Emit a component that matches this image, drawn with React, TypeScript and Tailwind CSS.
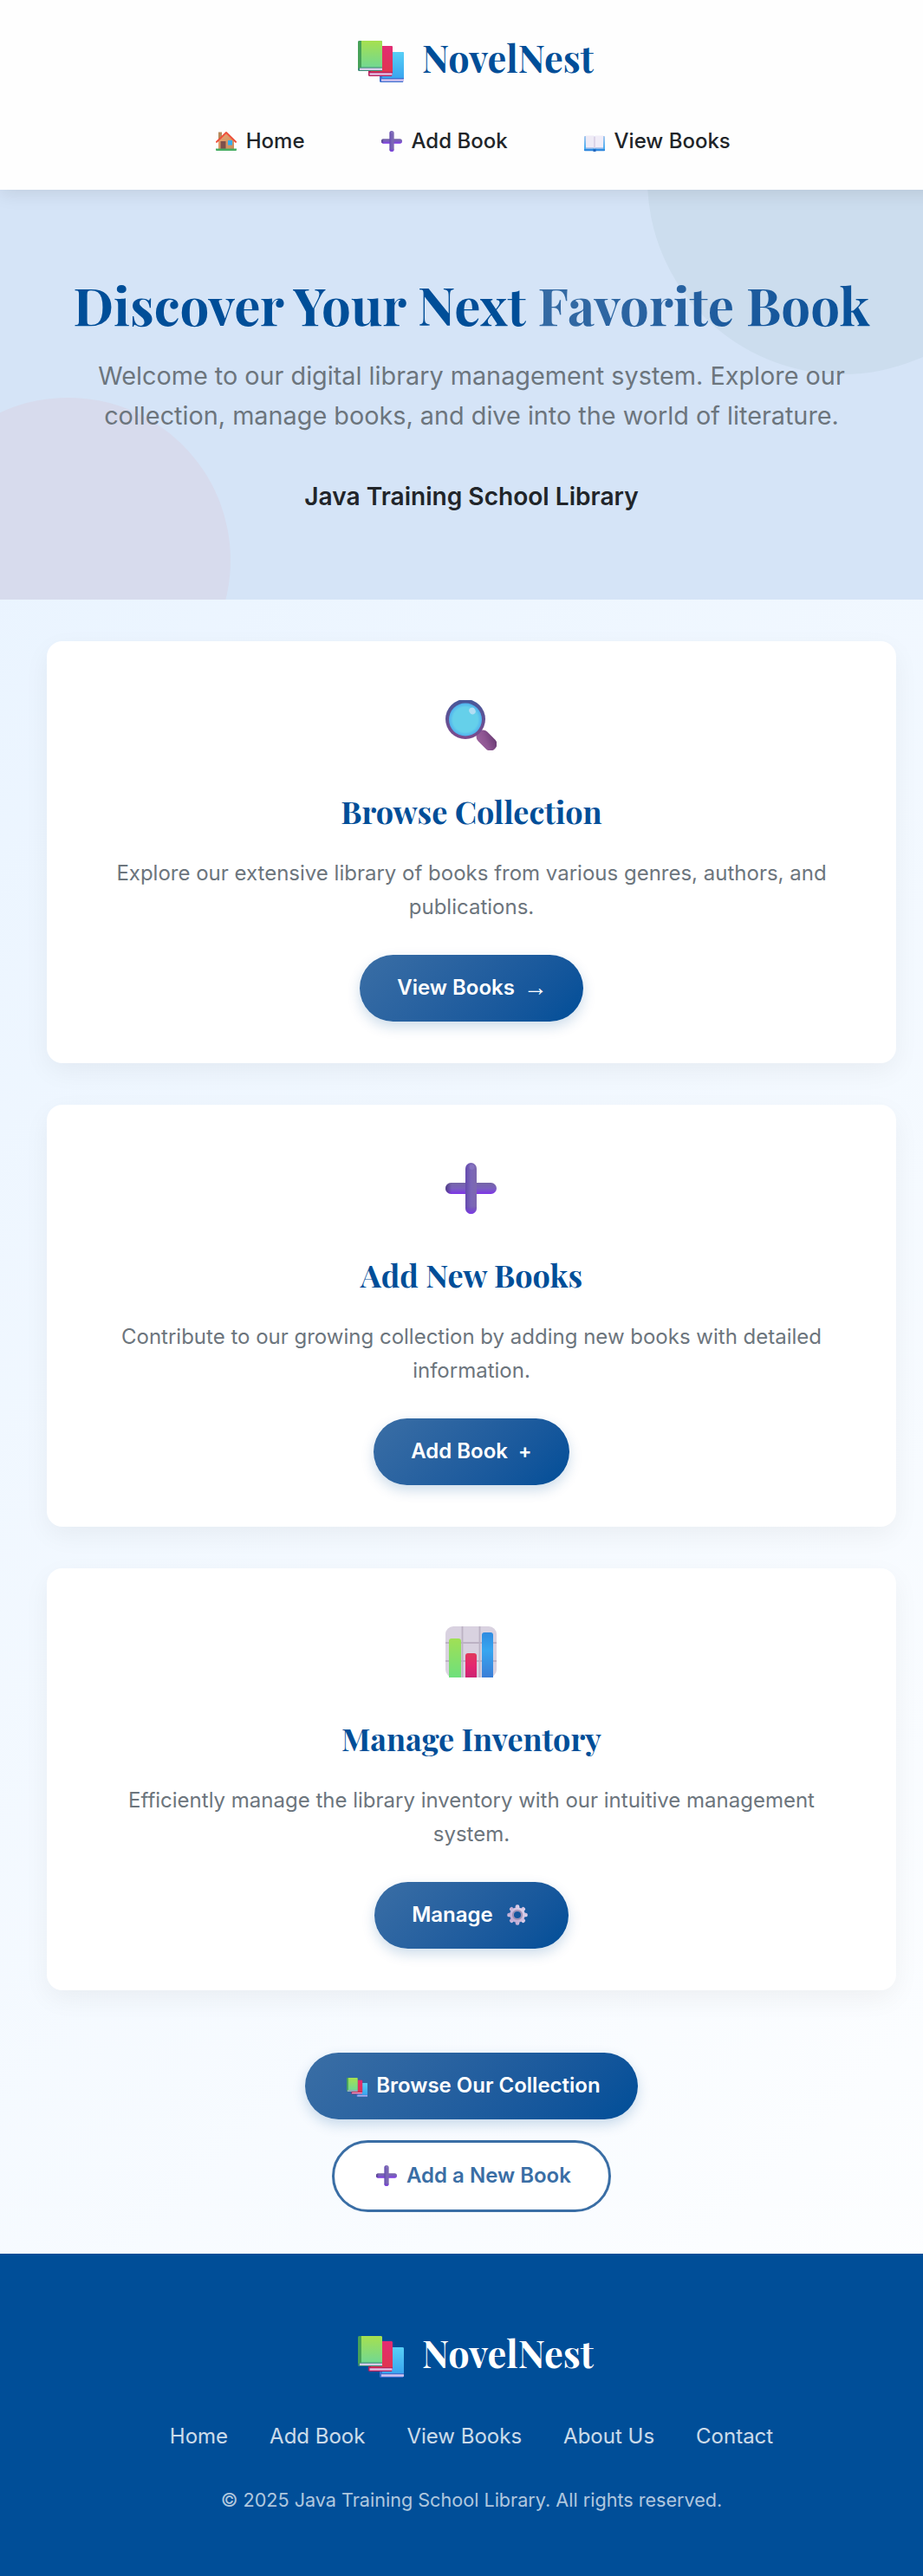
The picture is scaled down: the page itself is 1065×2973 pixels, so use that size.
import type { ReactNode } from "react";

function BooksIcon({ className }: { className: string }) {
  return (
    <svg viewBox="0 0 53 48" className={className} preserveAspectRatio="none" aria-hidden="true">
      <defs>
        <linearGradient id="bk-g" x1="0" y1="0" x2="0" y2="1"><stop stopColor="#a6e04f" /><stop offset="1" stopColor="#72d891" /></linearGradient>
        <linearGradient id="bk-r" x1="0" y1="0" x2="0" y2="1"><stop stopColor="#e22c74" /><stop offset="1" stopColor="#e0354f" /></linearGradient>
        <linearGradient id="bk-b" x1="0" y1="0" x2="0" y2="1"><stop stopColor="#57d0f6" /><stop offset="1" stopColor="#3aa5ef" /></linearGradient>
      </defs>
      <path d="M25 15a2 2 0 0 1 2-2h24.500a1.500 1.500 0 0 1 1.500 1.500V44l-1 4H26.500A1.500 1.500 0 0 1 25 46.500z" fill="#3b6fd0" />
      <path d="M28 13h23.500a1.500 1.500 0 0 1 1.500 1.500V43H28z" fill="url(#bk-b)" />
      <path d="M27 44.300h26v2.500H27z" fill="#d4c3ee" />
      <path d="M12 8a2 2 0 0 1 2-2h24.500A1.500 1.500 0 0 1 40 7.500V37l-1 4H13.500A1.500 1.500 0 0 1 12 39.500z" fill="#b81f5b" />
      <path d="M15 6h23.500A1.500 1.500 0 0 1 40 7.500V36H15z" fill="url(#bk-r)" />
      <path d="M13.500 37.300H39.500v2.400H13.500z" fill="#e4bfe4" />
      <path d="M0 2a2 2 0 0 1 2-2h24.500A1.500 1.500 0 0 1 28 1.500V35H1.500A1.500 1.500 0 0 1 0 33.500z" fill="#3b8a76" />
      <path d="M0 2a2 2 0 0 1 2-2h2v30.500L0 32z" fill="#46a158" />
      <path d="M4 0h22.500A1.500 1.500 0 0 1 28 1.500V30.500H4z" fill="url(#bk-g)" />
      <path d="M2 31.600h26v2.400H2z" fill="#d6cdea" />
    </svg>
  );
}

function HouseIcon({ className }: { className: string }) {
  return (
    <svg viewBox="0 0 24 23" className={className} aria-hidden="true">
      <defs><linearGradient id="hs-w" x1="0" y1="0" x2="1" y2="1"><stop stopColor="#e9a673" /><stop offset="1" stopColor="#c98d5c" /></linearGradient></defs>
      <path d="M3 1.500h4V10H3z" fill="#b88a5c" />
      <path d="M3 11.500 12 3l9 8.500V21H3z" fill="url(#hs-w)" />
      <path d="M5.500 12h6v9h-6z" fill="#7d4f4b" />
      <path d="M14 11h5v5.500h-5z" fill="#35aef0" />
      <path d="M1 12.800 12 2l11 10.800" fill="none" stroke="#ee4f3a" strokeWidth="2" strokeLinecap="round" strokeLinejoin="round" />
      <path d="M0 20.600h24V22a1 1 0 0 1-1 1H1a1 1 0 0 1-1-1z" fill="#46ad62" />
    </svg>
  );
}

function PlusIcon({ className }: { className: string }) {
  return (
    <svg viewBox="0 0 59 59" className={className} aria-hidden="true">
      <defs>
        <linearGradient id="pl-h" x1="0" y1="0" x2="0" y2="1"><stop stopColor="#7566a6" /><stop offset=".5" stopColor="#7a60be" /><stop offset="1" stopColor="#7f35e8" /></linearGradient>
        <linearGradient id="pl-v" x1="0" y1="0" x2="1" y2="0"><stop stopColor="#6449ad" /><stop offset=".5" stopColor="#7a66b8" /><stop offset="1" stopColor="#7d69ae" /></linearGradient>
        <linearGradient id="pl-e" x1="0" y1="0" x2="0" y2="1"><stop offset=".85" stopColor="#6a35c8" stopOpacity="0" /><stop offset="1" stopColor="#8038f0" /></linearGradient>
        <linearGradient id="pl-l" x1="0" y1="0" x2="1" y2="0"><stop stopColor="#4d3a83" /><stop offset=".12" stopColor="#4d3a83" stopOpacity="0" /></linearGradient>
      </defs>
      <rect x="0" y="23" width="59" height="13" rx="6.500" fill="url(#pl-h)" />
      <rect x="0" y="23" width="59" height="13" rx="6.500" fill="url(#pl-l)" />
      <rect x="23" y="0" width="13" height="59" rx="6.500" fill="url(#pl-v)" />
      <rect x="23" y="0" width="13" height="59" rx="6.500" fill="url(#pl-e)" />
      <circle cx="30.500" cy="5" r="3" fill="#8b79c4" opacity=".7" />
    </svg>
  );
}

function OpenBookIcon({ className }: { className: string }) {
  return (
    <svg viewBox="0 0 24 19" className={className} aria-hidden="true">
      <defs><linearGradient id="ob" x1="0" y1="0" x2="0" y2="1"><stop stopColor="#a9c8ee" /><stop offset="1" stopColor="#38a8f2" /></linearGradient></defs>
      <rect x="0" y="1" width="24" height="17" rx="1" fill="url(#ob)" />
      <path d="M0 16.200h24V17.500a.8.800 0 0 1-.8.800H.8a.8.800 0 0 1-.8-.8z" fill="#2f86dd" />
      <path d="M10.500 16h3v3h-3z" fill="#2466bd" />
      <path d="M2 .5h8.500Q12 .5 12 2v13.500q-.5-1-2-1H2z" fill="#efebf6" />
      <path d="M22 .5h-8.500Q12 .5 12 2v13.500q.5-1 2-1h8z" fill="#f1edf8" />
      <path d="M12 2v13.500" stroke="#c5b8d6" strokeWidth=".9" />
      <path d="M2 15h8.500M13.500 15H22" stroke="#cfc3e4" strokeWidth="1" />
    </svg>
  );
}

function MagnifierIcon({ className }: { className: string }) {
  return (
    <svg viewBox="0 0 59 58" className={className} aria-hidden="true">
      <defs>
        <linearGradient id="mg-r" x1="0" y1="0" x2="0" y2="1"><stop stopColor="#45589a" /><stop offset="1" stopColor="#7f4a8c" /></linearGradient>
        <radialGradient id="mg-l"><stop offset=".75" stopColor="#65d0ea" /><stop offset="1" stopColor="#4fb0ee" /></radialGradient>
        <linearGradient id="mg-h" x1="1" y1="0" x2="0.200" y2="1"><stop stopColor="#65386f" /><stop offset=".6" stopColor="#8e5592" /><stop offset="1" stopColor="#9a629c" /></linearGradient>
      </defs>
      <rect x="34" y="39" width="27" height="15" rx="7" transform="rotate(45 47.500 46.500)" fill="url(#mg-h)" />
      <circle cx="23" cy="22" r="23" fill="url(#mg-r)" />
      <circle cx="23" cy="22.500" r="19" fill="url(#mg-l)" />
      <ellipse cx="31" cy="12.500" rx="3.600" ry="4" fill="#bfe0f6" opacity=".85" transform="rotate(-30 31 12.500)" />
    </svg>
  );
}

function ChartIcon({ className }: { className: string }) {
  return (
    <svg viewBox="0 0 59 59" className={className} aria-hidden="true">
      <defs>
        <linearGradient id="ch-g" x1="0" y1="0" x2="0" y2="1"><stop stopColor="#a0e055" /><stop offset="1" stopColor="#6ee07c" /></linearGradient>
        <linearGradient id="ch-r" x1="0" y1="0" x2="0" y2="1"><stop stopColor="#e03a5c" /><stop offset=".5" stopColor="#e5266f" /><stop offset="1" stopColor="#cc2373" /></linearGradient>
        <linearGradient id="ch-b" x1="0" y1="0" x2="0" y2="1"><stop stopColor="#2f8be0" /><stop offset=".4" stopColor="#37a6f0" /><stop offset="1" stopColor="#3a7dd6" /></linearGradient>
      </defs>
      <rect width="59" height="59" rx="9" fill="#d9d2e0" />
      <path d="M19.500 0v59M39.500 0v59M0 19h59M0 40h59" stroke="#bcb2c4" strokeWidth="1.800" />
      <path d="M4 59V17a3 3 0 0 1 3-3h8a3 3 0 0 1 3 3v42z" fill="url(#ch-g)" />
      <path d="M23 59V34a3 3 0 0 1 3-3h7a3 3 0 0 1 3 3v25z" fill="url(#ch-r)" />
      <path d="M42 59V10a3 3 0 0 1 3-3h7a3 3 0 0 1 3 3v49z" fill="url(#ch-b)" />
    </svg>
  );
}

function GearIcon({ className }: { className: string }) {
  return (
    <svg viewBox="-12 -12 24 24" className={className} aria-hidden="true">
      <defs><linearGradient id="gr" x1="1" y1="0" x2="0" y2="1"><stop stopColor="#e3d8ee" /><stop offset="1" stopColor="#b9a3cf" /></linearGradient></defs>
      <g fill="url(#gr)">
        {[0, 45, 90, 135].map((a) => (
          <rect key={a} x="-2.300" y="-11.700" width="4.600" height="23.400" rx="1.900" transform={`rotate(${a})`} />
        ))}
        <circle r="8.800" />
      </g>
      <circle r="5.200" fill="none" stroke="#9d90b4" strokeWidth="1.800" />
      <circle r="4.100" fill="#14559c" />
    </svg>
  );
}

const PLAYFAIR = "font-['Playfair_Display','Liberation_Serif',serif] font-bold";
const PRIMARY =
  "flex h-[77px] items-center rounded-full bg-linear-135 from-[#3a6ea5] to-[#004e98] pl-[43.200px] font-semibold text-white shadow-[0_6px_15px_rgba(0,78,152,0.2)]";

function Logo({ color }: { color: string }) {
  return (
    <div className="flex justify-center">
      <BooksIcon className="mt-[15.500px] ml-[10px] h-12 w-[53px]" />
      <span className={`ml-[21px] text-[43.200px] leading-[69px] ${PLAYFAIR} ${color}`}>NovelNest</span>
    </div>
  );
}

function NavItem({ icon, label }: { icon: ReactNode; label: string }) {
  return (
    <a className="flex items-center gap-[10.500px] font-medium text-[#212529]">
      {icon}
      {label}
    </a>
  );
}

function Card({ icon, title, lines, button }: { icon: ReactNode; title: string; lines: [string, string]; button: ReactNode }) {
  return (
    <section className="flex h-[487px] flex-col items-center rounded-[18px] bg-white pt-[67.500px] text-center shadow-[0_10px_30px_rgba(0,0,0,0.05)]">
      {icon}
      <h2 className={`mt-[42px] text-[36px] leading-[57.600px] text-[#004e98] ${PLAYFAIR}`}>{title}</h2>
      <p className="mt-6 mb-9 text-[#6c757d]">
        {lines[0]}
        <br />
        {lines[1]}
      </p>
      {button}
    </section>
  );
}

export default function App() {
  return (
    <div className="w-full overflow-hidden">
      <div className="flex h-[2973px] w-[1088px] flex-col overflow-hidden bg-linear-135 from-[#e6f2ff] to-white font-[Inter,sans-serif] text-[24px] leading-[38.400px]">
        <header className="relative z-10 h-[219px] shrink-0 bg-[#fefefe] pt-[31.500px] shadow-[0_4px_20px_rgba(0,0,0,0.1)]">
          <Logo color="text-[#004e98]" />
          <nav className="mt-[43px] ml-[4px] flex justify-center gap-[88.500px]">
            <NavItem icon={<HouseIcon className="h-[23px] w-6" />} label="Home" />
            <NavItem icon={<PlusIcon className="h-6 w-6" />} label="Add Book" />
            <NavItem icon={<OpenBookIcon className="mt-[6px] h-[19px] w-6" />} label="View Books" />
          </nav>
        </header>

        <section className="relative h-[473px] shrink-0 overflow-hidden bg-[#d5e4f7] pt-24 text-center">
          <div className="absolute -top-[237px] left-[747px] size-[450px] rounded-full bg-[#ccddee]" />
          <div className="absolute top-[240px] -left-[109px] size-[375px] rounded-full bg-[#d7dbed]" />
          <div className="relative">
            <h1 className={`text-[60px] leading-[72px] whitespace-nowrap text-[#004e98] ${PLAYFAIR}`}>
              Discover Your Next{" "}
              <span className="bg-linear-135 from-[#3a6ea5] to-[#004e98] bg-clip-text text-transparent">Favorite Book</span>
            </h1>
            <p className="mt-6 text-[28.800px] leading-[46.080px] text-[#6c757d]">
              Welcome to our digital library management system. Explore our
              <br />
              collection, manage books, and dive into the world of literature.
            </p>
            <h3 className="mt-12 text-[28.080px] leading-[44.900px] font-semibold text-[#212529]">Java Training School Library</h3>
          </div>
        </section>

        <main className="flex flex-col gap-12 px-[54px] pt-12">
          <Card
            icon={<MagnifierIcon className="mr-px h-[58px] w-[59px] shrink-0" />}
            title="Browse Collection"
            lines={["Explore our extensive library of books from various genres, authors, and", "publications."]}
            button={
              <a className={`w-[258px] ${PRIMARY}`}>
                View Books
                <span className="ml-[10px] font-['Liberation_Serif',serif] text-[28px] font-normal">→</span>
              </a>
            }
          />
          <Card
            icon={<PlusIcon className="-mt-px mr-px h-[59px] w-[59px] shrink-0" />}
            title="Add New Books"
            lines={["Contribute to our growing collection by adding new books with detailed", "information."]}
            button={
              <a className={`w-[226px] ${PRIMARY}`}>
                Add Book
                <span className="ml-[12px] text-[23px]">+</span>
              </a>
            }
          />
          <Card
            icon={<ChartIcon className="-mt-px mr-px h-[59px] w-[59px] shrink-0" />}
            title="Manage Inventory"
            lines={["Efficiently manage the library inventory with our intuitive management", "system."]}
            button={
              <a className={`w-[224px] ${PRIMARY}`}>
                Manage
                <GearIcon className="ml-4 size-6" />
              </a>
            }
          />
        </main>

        <div className="mt-[72px] flex flex-col items-center gap-6">
          <a className={`w-[384px] ${PRIMARY}`}>
            <BooksIcon className="mt-[2px] mr-[10px] ml-[5px] h-[22px] w-6" />
            Browse Our Collection
          </a>
          <a className="flex h-[83px] w-[322px] items-center rounded-full border-3 border-[#3a6ea5] bg-white pl-12 font-semibold text-[#3a6ea5]">
            <PlusIcon className="mr-[11px] mb-[2px] size-6" />
            Add a New Book
          </a>
        </div>

        <footer className="mt-12 flex flex-1 flex-col bg-[#004e98] pt-[79.500px] text-center">
          <Logo color="text-white" />
          <nav className="mt-[43.500px] flex justify-center gap-12 text-white/80">
            <a>Home</a>
            <a>Add Book</a>
            <a>View Books</a>
            <a>About Us</a>
            <a>Contact</a>
          </nav>
          <p className="mt-[36.500px] text-[21.600px] leading-[34.560px] text-white/70">© 2025 Java Training School Library. All rights reserved.</p>
        </footer>
      </div>
    </div>
  );
}
